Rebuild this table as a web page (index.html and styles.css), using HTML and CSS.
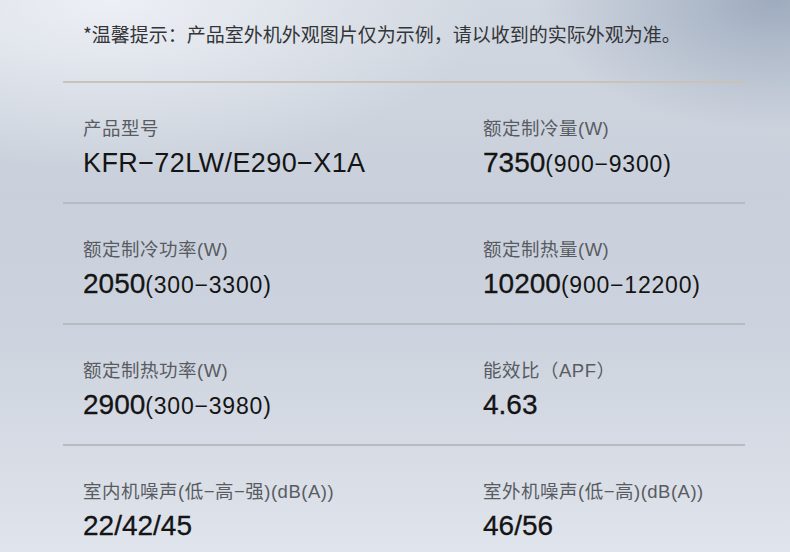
FILE: index.html
```html
<!DOCTYPE html>
<html lang="zh-CN">
<head>
<meta charset="utf-8">
<title>产品参数</title>
<link rel="stylesheet" href="styles.css">
</head>
<body>
<div class="page">
  <p class="notice">*温馨提示：产品室外机外观图片仅为示例，请以收到的实际外观为准。</p>
  <div class="specs">
    <div class="row first">
      <div class="cell left">
        <div class="label">产品型号</div>
        <div class="value model">KFR−72LW/E290−X1A</div>
      </div>
      <div class="cell right">
        <div class="label">额定制冷量(W)</div>
        <div class="value">7350<span class="range">(900−9300)</span></div>
      </div>
    </div>
    <div class="row">
      <div class="cell left">
        <div class="label">额定制冷功率(W)</div>
        <div class="value">2050<span class="range">(300−3300)</span></div>
      </div>
      <div class="cell right">
        <div class="label">额定制热量(W)</div>
        <div class="value">10200<span class="range">(900−12200)</span></div>
      </div>
    </div>
    <div class="row">
      <div class="cell left">
        <div class="label">额定制热功率(W)</div>
        <div class="value">2900<span class="range">(300−3980)</span></div>
      </div>
      <div class="cell right">
        <div class="label">能效比（APF）</div>
        <div class="value">4.63</div>
      </div>
    </div>
    <div class="row">
      <div class="cell left">
        <div class="label">室内机噪声(低−高−强)(dB(A))</div>
        <div class="value">22/42/45</div>
      </div>
      <div class="cell right">
        <div class="label">室外机噪声(低−高)(dB(A))</div>
        <div class="value">46/56</div>
      </div>
    </div>
  </div>
</div>
</body>
</html>
```
FILE: styles.css
```css
html, body {
  margin: 0;
  padding: 0;
}
body {
  width: 790px;
  height: 552px;
  overflow: hidden;
}
.page {
  width: 790px;
  height: 552px;
  box-sizing: border-box;
  padding: 21px 45px 0 63px;
  font-family: "Liberation Sans", "Noto Sans CJK SC", sans-serif;
  background:
    radial-gradient(ellipse 240px 130px at 775px 0px, rgba(145,160,182,0.8), rgba(145,160,182,0) 100%),
    radial-gradient(ellipse 380px 170px at 110px 0px, rgba(238,241,246,0.95), rgba(238,241,246,0) 100%),
    linear-gradient(180deg, #d2d8e1 0%, #c9d0db 35%, #cdd3de 60%, #d8dde6 85%, #e0e4ec 100%);
}
.notice {
  margin: 0 0 34px 20px;
  font-family: "Noto Sans CJK SC", sans-serif;
  font-size: 19px;
  line-height: 26px;
  color: #333538;
  letter-spacing: 0;
}
.specs {
  width: 682px;
}
.row {
  display: flex;
  border-top: 2px solid #b6bac1;
}
.row.first {
  border-top-color: #c7c3b8;
}
.cell {
  box-sizing: border-box;
  padding: 34px 0 22px 20px;
}
.cell.left {
  width: 400px;
}
.cell.right {
  flex: 1;
}
.label {
  font-size: 18.5px;
  line-height: 24px;
  letter-spacing: 0.5px;
  color: #585c62;
  white-space: nowrap;
}
.value {
  margin-top: 6px;
  font-size: 28px;
  line-height: 32px;
  color: #141414;
  white-space: nowrap;
  -webkit-text-stroke: 0.3px #141414;
}
.value.model {
  font-size: 27px;
  letter-spacing: 0.4px;
  -webkit-text-stroke: 0;
}
.range {
  font-size: 23px;
  letter-spacing: 0.8px;
  -webkit-text-stroke: 0;
}
```
